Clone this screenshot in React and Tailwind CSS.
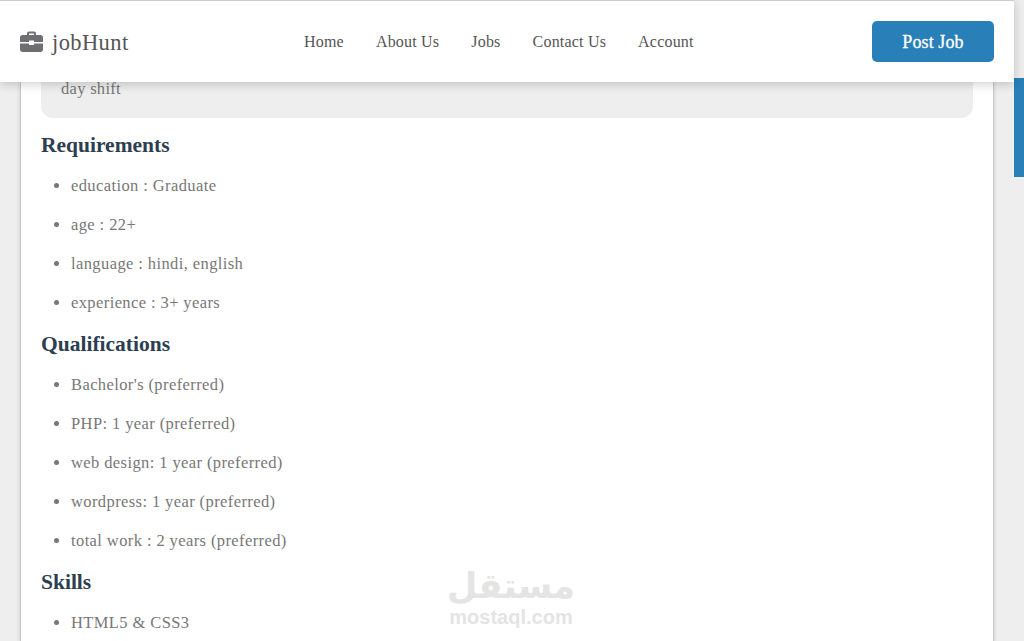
import React from 'react';

const navLinks = ['Home', 'About Us', 'Jobs', 'Contact Us', 'Account'];

const sections = [
  { title: 'Requirements', items: ['education : Graduate', 'age : 22+', 'language : hindi, english', 'experience : 3+ years'] },
  { title: 'Qualifications', items: ["Bachelor's (preferred)", 'PHP: 1 year (preferred)', 'web design: 1 year (preferred)', 'wordpress: 1 year (preferred)', 'total work : 2 years (preferred)'] },
  { title: 'Skills', items: ['HTML5 & CSS3'] },
];

function BriefcaseIcon() {
  return (
    <svg width="23" height="21" viewBox="0 0 23 21" className="text-[#6f6f73]" fill="currentColor">
      <path d="M7 4V2.5C7 1.4 7.900.5 9 .5h5c1.100 0 2 .9 2 2V4h-2V2.500H9V4z" />
      <path d="M2.500 4h18C21.900 4 23 5.100 23 6.500V11h-9V9.500H9V11H0V6.500C0 5.100 1.100 4 2.500 4z" />
      <path d="M0 12.500h9V14h5v-1.500h9v6c0 1.400-1.100 2.500-2.500 2.500h-18C1.100 21 0 19.900 0 18.500z" />
    </svg>
  );
}

export default function App() {
  return (
    <div className="h-[641px] w-[1024px] overflow-hidden flex bg-[#eeeeee] font-['Liberation_Serif',serif]">
      <div className="w-[1014px] flex flex-col relative">
        {/* Header */}
        <header className="relative z-10 h-[82px] shrink-0 bg-white border-t border-[#cccccc] shadow-[0_2px_10px_rgba(0,0,0,0.2)] flex items-center px-[20px]">
          <div className="flex items-center gap-[9px] w-[284px]">
            <BriefcaseIcon />
            <span className="text-[22.5px] tracking-[0.4px] text-[#555555] relative top-[1px]">jobHunt</span>
          </div>
          <nav className="flex items-center gap-[32px] pt-[1px]">
            {navLinks.map((link) => (
              <a key={link} className="text-[16px] tracking-[0.2px] text-[#555555] whitespace-nowrap">
                {link}
              </a>
            ))}
          </nav>
          <button className="ml-auto w-[122px] h-[41px] rounded-[5px] bg-[#2980b9] text-white text-[18px] tracking-[0.1px] pt-[2px] [-webkit-text-stroke:0.3px_white]">
            Post Job
          </button>
        </header>

        {/* Card */}
        <main className="flex-1 flex flex-col ml-[20px] w-[974px] bg-white border-x border-[#c8c8c8] shadow-[0_0_4px_rgba(0,0,0,0.15)] px-[20px]">
          <div className="h-[36px] mb-[5px] shrink-0 bg-[#eeeeee] rounded-b-[12px] pl-[20px] text-[16.5px] tracking-[0.3px] leading-[14px] text-[#777777]">day shift</div>
          {sections.map((section) => (
            <section key={section.title}>
              <h3 className="mt-[9px] h-[27px] leading-[27px] text-[21.500px] font-bold text-[#2c3e50]">{section.title}</h3>
              <ul className="list-disc pl-[30px] mt-[7px] text-[16.5px] tracking-[0.4px] leading-[39px] text-[#777777]">
                {section.items.map((item) => (
                  <li key={item}>{item}</li>
                ))}
              </ul>
            </section>
          ))}
        </main>

        {/* Watermark */}
        <div className="absolute left-[446px] top-[566px] w-[130px] flex flex-col items-center text-[#e4e4e4] font-['DejaVu_Sans',sans-serif] font-bold">
          <span className="text-[35px] leading-[40px]" dir="rtl">مستقل</span>
          <span className="font-['Liberation_Sans',sans-serif] text-[20px] leading-[22px]">mostaql.com</span>
        </div>
      </div>

      {/* Scrollbar */}
      <div className="w-[10px] flex-1">
        <div className="mt-[78px] h-[99px] bg-[#2980b9]" />
      </div>
    </div>
  );
}
